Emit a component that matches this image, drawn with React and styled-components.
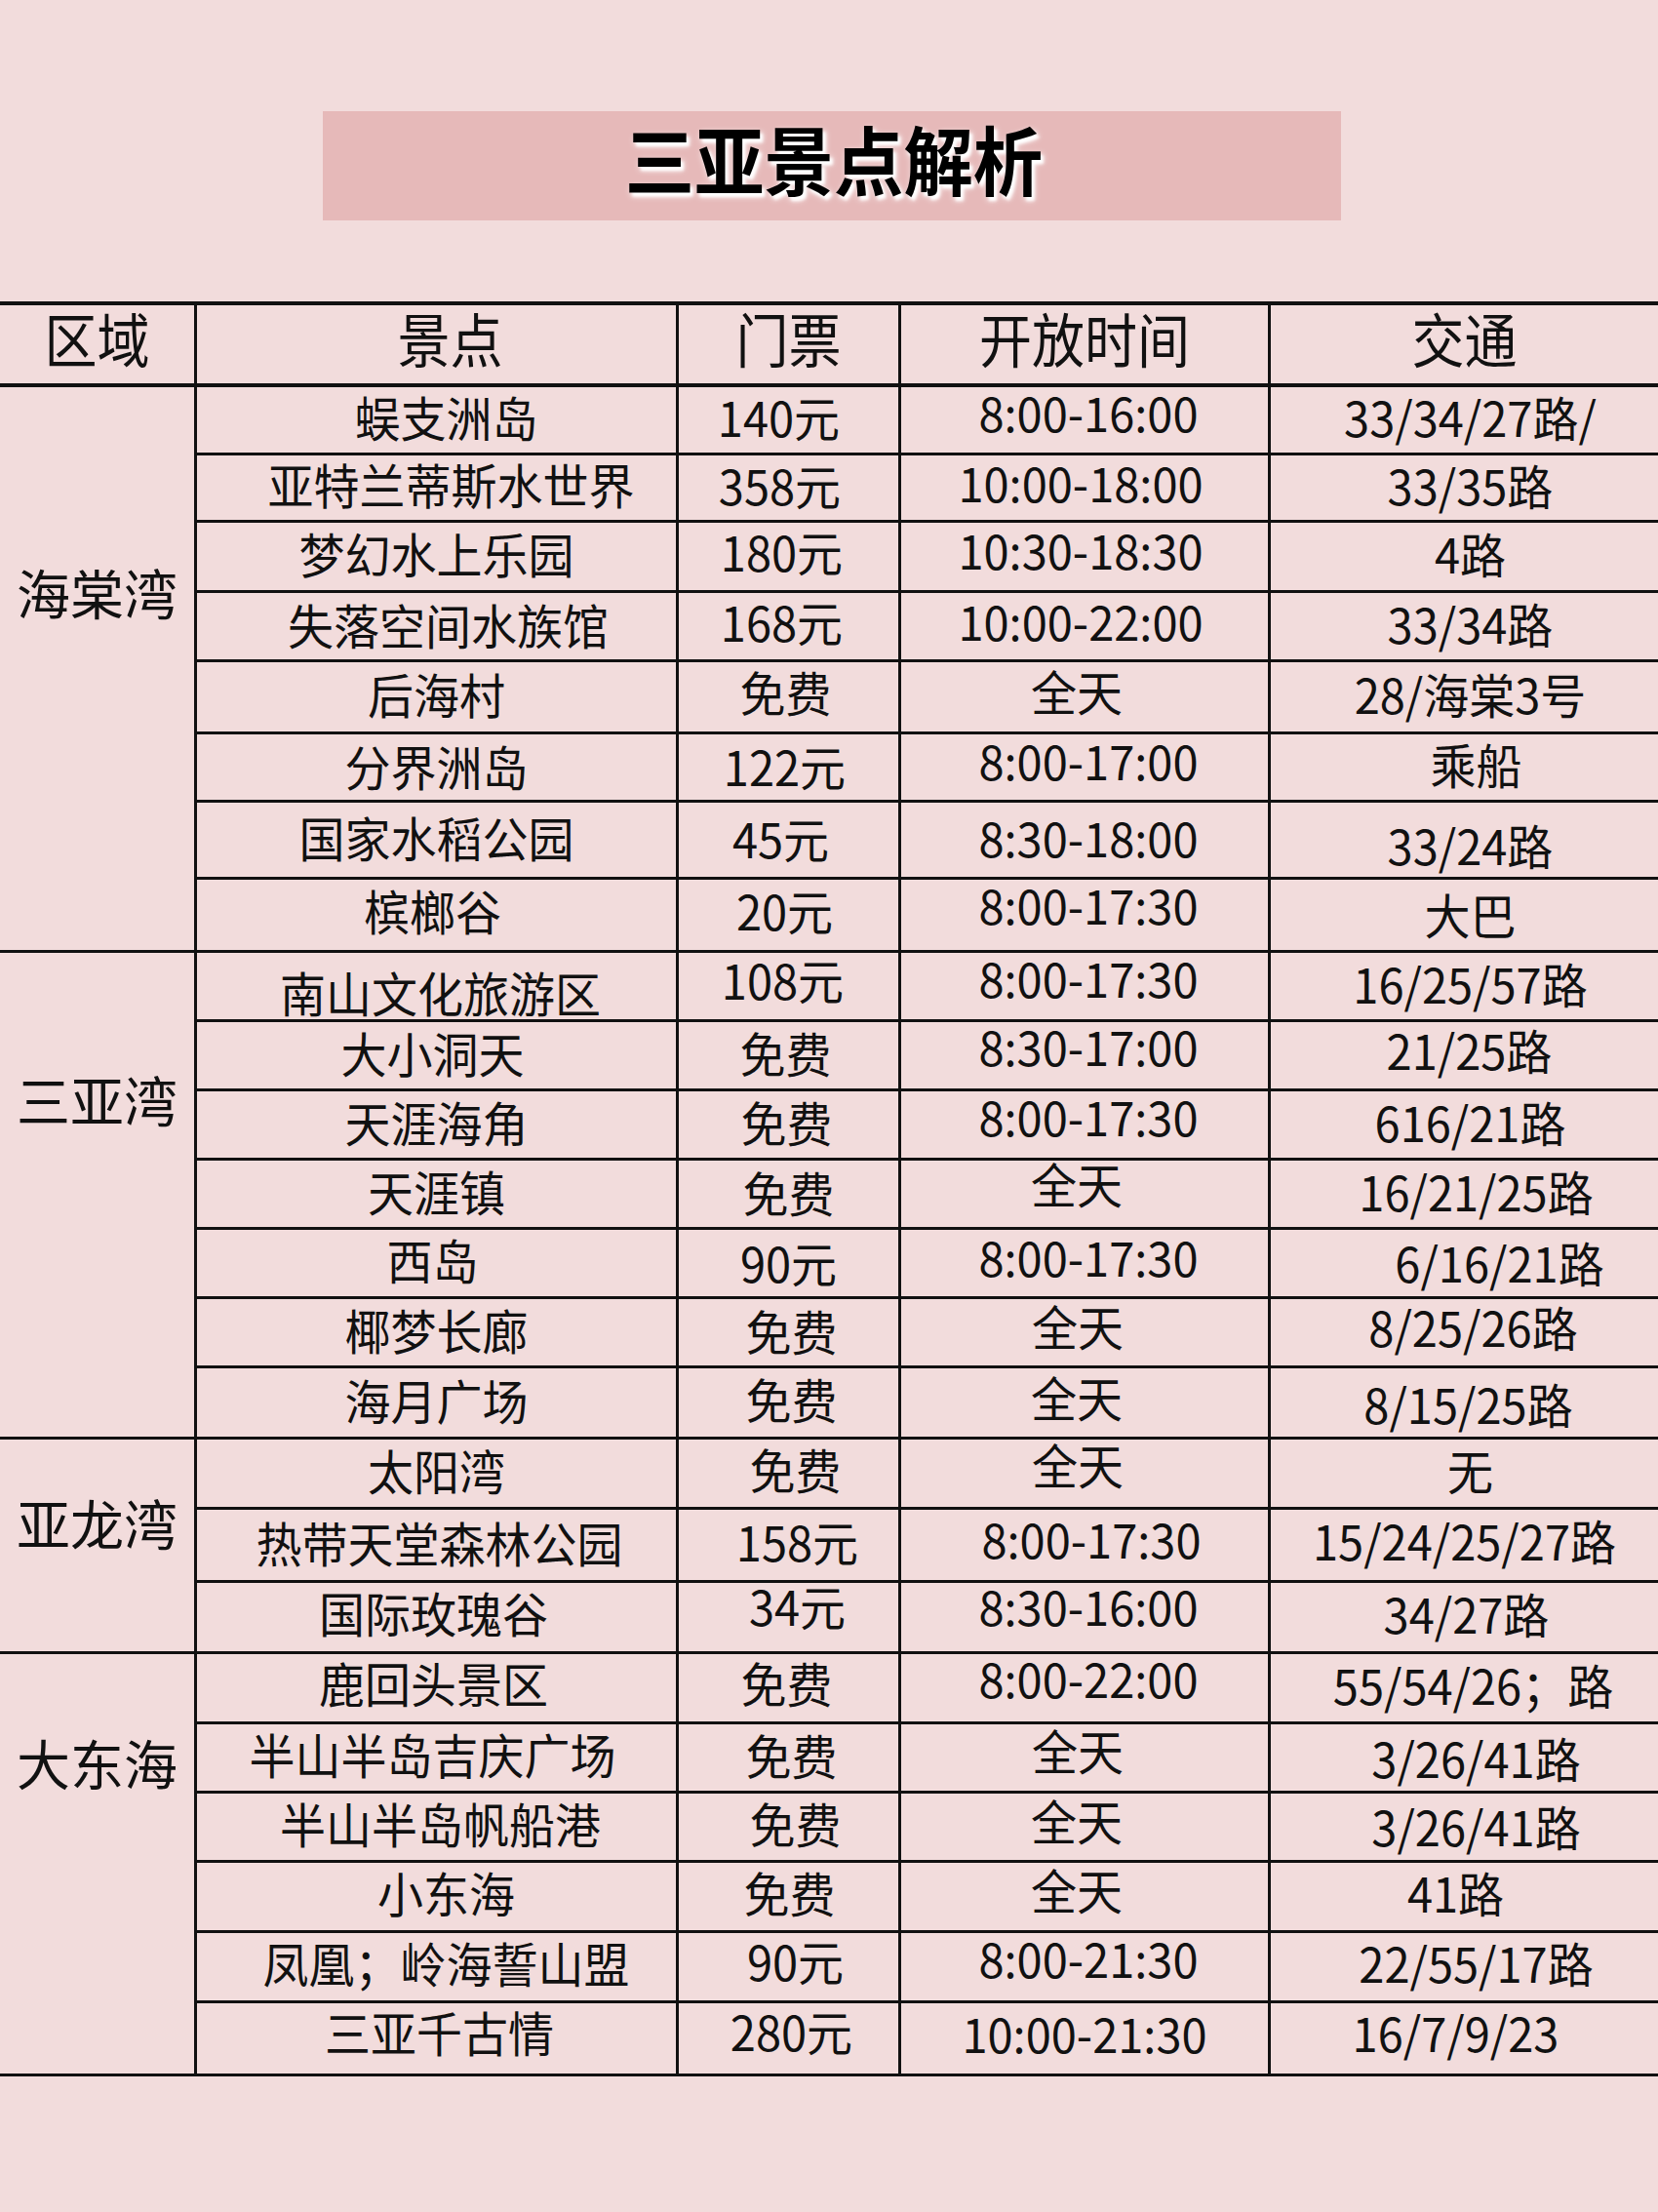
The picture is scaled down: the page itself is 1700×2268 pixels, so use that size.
import styled, { createGlobalStyle } from 'styled-components';

const GlobalStyle = createGlobalStyle`
  html, body {
    margin: 0;
    padding: 0;
    background: #f2dcdc;
  }
  body {
    font-family: "Noto Sans CJK SC", "Noto Sans", sans-serif;
    color: #111;
  }
`;

// default nudge per column [dx, dy] – the source sheet is not perfectly centred
const colShift = [
  [0, -4],
  [0, -4],
  [0, -9],
  [6, -4],
];

// row: [height, name, ticket, hours, transit, { colIndex: [dx, dy] }]
const sections = [
  {
    name: '海棠湾',
    top: 182,
    rows: [
      [70, '蜈支洲岛', '140元', '8:00-16:00', '33/34/27路/', { 0: [10, -4], 1: [-10, -4], 2: [4, -9] }],
      [69, '亚特兰蒂斯水世界', '358元', '10:00-18:00', '33/35路', { 0: [15, -5], 1: [-9, -4], 2: [-4, -7] }],
      [72, '梦幻水上乐园', '180元', '10:30-18:30', '4路', { 1: [-7, -6], 2: [-4, -8] }],
      [71, '失落空间水族馆', '168元', '10:00-22:00', '33/34路', { 0: [12, -3], 1: [-7, -6], 2: [-4, -7] }],
      [74, '后海村', '免费', '全天', '28/海棠3号', { 1: [-3, -6], 2: [-8, -7] }],
      [70, '分界洲岛', '122元', '8:00-17:00', '乘船', { 0: [0, -2], 1: [-4, -2], 2: [4, -8], 3: [12, -4] }],
      [79, '国家水稻公园', '45元', '8:30-18:00', '33/24路', { 1: [-8, -3], 2: [4, -4], 3: [6, 4] }],
      [75, '槟榔谷', '20元', '8:00-17:30', '大巴', { 0: [-4, -6], 1: [-4, -6], 2: [4, -12], 3: [6, -2] }],
    ],
  },
  {
    name: '三亚湾',
    top: 122,
    rows: [
      [71, '南山文化旅游区', '108元', '8:00-17:30', '16/25/57路', { 0: [4, 5], 1: [-6, -8], 2: [4, -10] }],
      [71, '大小洞天', '免费', '8:30-17:00', '21/25路', { 0: [-4, -4], 1: [-3, -4], 2: [4, -11], 3: [5, -7] }],
      [71, '天涯海角', '免费', '8:00-17:30', '616/21路', { 1: [-2, -4], 2: [4, -10] }],
      [71, '天涯镇', '免费', '全天', '16/21/25路', { 1: [0, -3], 2: [-8, -12], 3: [12, -4] }],
      [71, '西岛', '90元', '8:00-17:30', '6/16/21路', { 0: [-4, -5], 1: [0, -2], 2: [4, -8], 3: [36, -2] }],
      [71, '椰梦长廊', '免费', '全天', '8/25/26路', { 1: [3, -3], 2: [-7, -8], 3: [9, -7] }],
      [73, '海月广场', '免费', '全天', '8/15/25路', { 1: [3, -5], 2: [-8, -7], 3: [4, 0] }],
    ],
  },
  {
    name: '亚龙湾',
    top: 57,
    rows: [
      [72, '太阳湾', '免费', '全天', '无', { 1: [7, -5], 2: [-7, -10], 3: [6, -4] }],
      [75, '热带天堂森林公园', '158元', '8:00-17:30', '15/24/25/27路', { 0: [3, -4], 1: [9, -5], 2: [7, -8], 3: [0, -6] }],
      [73, '国际玫瑰谷', '34元', '8:30-16:00', '34/27路', { 0: [-3, -6], 1: [9, -13], 2: [4, -13], 3: [2, -5] }],
    ],
  },
  {
    name: '大东海',
    top: 83,
    rows: [
      [72, '鹿回头景区', '免费', '8:00-22:00', '55/54/26；路', { 0: [-3, -6], 1: [-2, -6], 2: [4, -11], 3: [9, -4] }],
      [71, '半山半岛吉庆广场', '免费', '全天', '3/26/41路', { 0: [-4, -5], 1: [3, -4], 2: [-7, -9], 3: [12, -1] }],
      [71, '半山半岛帆船港', '免费', '全天', '3/26/41路', { 0: [4, -5], 1: [7, -5], 2: [-8, -8], 3: [12, -2] }],
      [72, '小东海', '免费', '全天', '41路', { 0: [10, -5], 1: [1, -5], 2: [-8, -8], 3: [-9, -5] }],
      [72, '凤凰；岭海誓山盟', '90元', '8:00-21:30', '22/55/17路', { 0: [10, -5], 1: [7, -7], 2: [4, -10], 3: [12, -5] }],
      [75, '三亚千古情', '280元', '10:00-21:30', '16/7/9/23', { 0: [3, -8], 1: [3, -9], 2: [0, -7], 3: [-9, -8] }],
    ],
  },
];

const headers = ['景点', '门票', '开放时间', '交通'];

const App = () => {
  return (
    <Page>
      <GlobalStyle />
      <Banner>
        <Title>三亚景点解析</Title>
      </Banner>
      <Table>
        <HeaderRow>
          <RegionHead>
            <HeadText>区域</HeadText>
          </RegionHead>
          <HeaderCells>
            {headers.map((h, i) => (
              <HeadCell key={h}>
                <HeadText $dx={i === 0 ? 14 : 0}>{h}</HeadText>
              </HeadCell>
            ))}
          </HeaderCells>
        </HeaderRow>
        {sections.map((section) => (
          <Section key={section.name}>
            <RegionCell $top={section.top}>{section.name}</RegionCell>
            <Rows>
              {section.rows.map(([height, ...rest]) => {
                const cells = rest.slice(0, 4);
                const shifts = rest[4] || {};
                return (
                  <Row key={cells[0]} $height={height}>
                    {cells.map((text, i) => {
                      const [dx, dy] = shifts[i] || colShift[i];
                      return (
                        <Cell key={i}>
                          <CellText $dx={dx} $dy={dy}>
                            {text}
                          </CellText>
                        </Cell>
                      );
                    })}
                  </Row>
                );
              })}
            </Rows>
          </Section>
        ))}
      </Table>
    </Page>
  );
};

export default App;

const Page = styled.div`
  width: 1700px;
  min-height: 2268px;
  background: #f2dcdc;
  padding-top: 114px;
  box-sizing: border-box;
`;

const Banner = styled.div`
  margin-left: 331px;
  width: 1044px;
  height: 112px;
  background: #e6b9b9;
  display: flex;
  align-items: center;
  justify-content: center;
`;

const Title = styled.h1`
  margin: 0;
  font-size: 70px;
  font-weight: 700;
  line-height: 1;
  color: #000;
  transform: translate(2px, -8px) scale(1.02, 1.1);
  text-shadow: 3px 4px 3px #ffffff, 2px 3px 7px rgba(255, 255, 255, 0.95);
`;

const Table = styled.div`
  margin-top: 83px;
  width: 1700px;
  border-top: 4px solid #111;
`;

const HeaderRow = styled.div`
  display: flex;
  height: 84px;
  box-sizing: border-box;
  border-bottom: 4px solid #111;
`;

const RegionHead = styled.div`
  width: 202px;
  flex-shrink: 0;
  box-sizing: border-box;
  border-right: 3px solid #111;
  display: flex;
  align-items: center;
  justify-content: center;
`;

const HeaderCells = styled.div`
  flex: 1;
  display: grid;
  grid-template-columns: 494px 228px 379px 1fr;
`;

const HeadCell = styled.div`
  display: flex;
  align-items: center;
  justify-content: center;
  border-right: 3px solid #111;
  &:last-child {
    border-right: none;
  }
`;

const HeadText = styled.span`
  font-size: 54px;
  line-height: 1;
  transform: translate(${(p) => p.$dx || 0}px, -7px) scaleY(1.12);
`;

const Section = styled.div`
  display: flex;
`;

const RegionCell = styled.div`
  width: 202px;
  flex-shrink: 0;
  box-sizing: border-box;
  border-right: 3px solid #111;
  border-bottom: 3px solid #111;
  padding-top: ${(p) => p.$top}px;
  text-align: center;
  font-size: 55px;
  line-height: 1;
`;

const Rows = styled.div`
  flex: 1;
  display: flex;
  flex-direction: column;
`;

const Row = styled.div`
  display: grid;
  grid-template-columns: 494px 228px 379px 1fr;
  height: ${(p) => p.$height}px;
  box-sizing: border-box;
  border-bottom: 3px solid #111;
`;

const Cell = styled.div`
  display: flex;
  align-items: center;
  justify-content: center;
  border-right: 3px solid #111;
  &:last-child {
    border-right: none;
  }
`;

const CellText = styled.span`
  font-size: 47px;
  line-height: 1;
  white-space: nowrap;
  transform: translate(${(p) => p.$dx}px, ${(p) => p.$dy}px) scaleY(1.04);
`;
